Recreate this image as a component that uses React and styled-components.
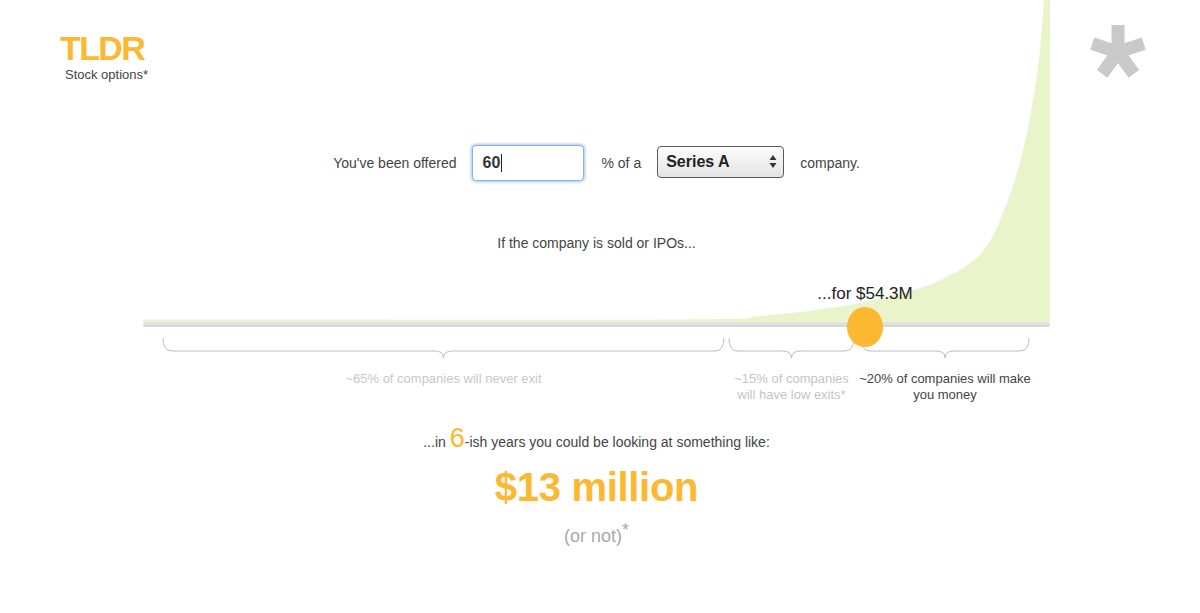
import React from "react";
import styled, { createGlobalStyle } from "styled-components";

const ORANGE = "#fcb831";
const GREEN = "#eaf4cb";

const GlobalStyle = createGlobalStyle`
  html, body {
    margin: 0;
    padding: 0;
    background: #fff;
  }
  body {
    font-family: "Liberation Sans", Arial, Helvetica, sans-serif;
    color: #444;
  }
`;

const Page = styled.div`
  position: relative;
  width: 1200px;
  height: 613px;
  overflow: hidden;
`;

const ChartBg = styled.svg`
  position: absolute;
  left: 143px;
  top: 0;
  z-index: 0;
`;

const Header = styled.header`
  position: relative;
  z-index: 1;
  display: flex;
  justify-content: space-between;
  align-items: flex-start;
  padding: 24px 51px 0 60px;
`;

const Logo = styled.div`
  margin-top: 5px;
`;

const LogoTitle = styled.div`
  font-size: 34px;
  line-height: 38px;
  font-weight: 700;
  letter-spacing: -1.6px;
  color: ${ORANGE};
`;

const LogoSub = styled.div`
  padding-left: 5px;
  font-size: 13px;
  line-height: 15px;
  color: #444;
`;

const Main = styled.main`
  position: relative;
  z-index: 1;
  width: 907px;
  margin-left: 143px;
  display: flex;
  flex-direction: column;
  align-items: center;
  text-align: center;
`;

const OfferRow = styled.div`
  display: flex;
  align-items: center;
  margin-top: 63px;
  font-size: 14px;
  color: #444;
`;

const Word = styled.span`
  margin: ${(p) => p.$m || "0"};
`;

const FakeInput = styled.div`
  box-sizing: border-box;
  width: 112px;
  height: 36px;
  display: flex;
  align-items: center;
  padding-left: 9px;
  border: 1px solid #8ab4e4;
  border-radius: 4px;
  box-shadow: 0 0 3px 1px rgba(110, 165, 230, 0.65);
  background: #fff;
  font-size: 16px;
  font-weight: 700;
  color: #333;
`;

const Caret = styled.span`
  display: inline-block;
  width: 1px;
  height: 18px;
  margin-left: 1px;
  background: #222;
`;

const Select = styled.div`
  box-sizing: border-box;
  width: 127px;
  height: 32px;
  margin-bottom: 3px;
  display: flex;
  align-items: center;
  justify-content: space-between;
  padding: 0 6px 0 8px;
  border: 1px solid #5a5a5a;
  border-radius: 4px;
  background: linear-gradient(#fbfbfb, #e4e4e4);
  font-size: 16px;
  font-weight: 700;
  color: #222;
`;

const Prompt = styled.div`
  margin-top: 54px;
  font-size: 14px;
  line-height: 16px;
  color: #444;
`;

const Slider = styled.div`
  position: relative;
  align-self: stretch;
  margin-top: 71px;
`;

const Track = styled.div`
  height: 5px;
  border-radius: 3px;
  background: linear-gradient(#e6e6e6, #d4d4d4);
`;

const Thumb = styled.div`
  position: absolute;
  top: -15px;
  width: 36px;
  height: 40px;
  border-radius: 50%;
  background: ${ORANGE};
  transform: translateX(-50%);
`;

const ValueLabel = styled.div`
  position: absolute;
  top: -38px;
  transform: translateX(-50%);
  white-space: nowrap;
  font-size: 17px;
  line-height: 20px;
  color: #222;
`;

const Segments = styled.div`
  display: flex;
  align-self: stretch;
  padding-left: 19px;
  margin-top: 11px;
`;

const Segment = styled.div`
  width: ${(p) => p.$w}px;
  margin-right: ${(p) => p.$gap || 0}px;
  display: flex;
  flex-direction: column;
  align-items: center;
`;

const SegLabel = styled.div`
  margin-top: 12px;
  font-size: 13px;
  line-height: 16px;
  color: ${(p) => p.$color};
  white-space: nowrap;
`;

const Years = styled.div`
  margin-top: 20px;
  font-size: 14px;
  line-height: 30px;
  color: #444;
`;

const BigSix = styled.span`
  font-size: 27px;
  color: ${ORANGE};
`;

const Amount = styled.div`
  margin-top: 6px;
  font-size: 40px;
  line-height: 48px;
  font-weight: 700;
  letter-spacing: -0.3px;
  color: ${ORANGE};
`;

const OrNot = styled.div`
  margin-top: 14px;
  font-size: 18px;
  line-height: 22px;
  color: #a8a8a8;
  sup {
    font-size: 18px;
    line-height: 0;
    vertical-align: 6px;
  }
`;

// catmull-rom through hand-picked points -> smooth bezier
const curvePoints = [
  [901, 0],
  [897, 50],
  [890, 100],
  [880, 150],
  [865, 200],
  [841, 250],
  [804, 277],
  [760, 293],
  [700, 306],
  [617, 316],
  [540, 319.5],
  [0, 319.5],
];

function buildCurve(pts) {
  let d = `M907,0 L${pts[0][0]},${pts[0][1]}`;
  for (let i = 0; i < pts.length - 1; i++) {
    const p0 = pts[i - 1] || pts[i];
    const p1 = pts[i];
    const p2 = pts[i + 1];
    const p3 = pts[i + 2] || p2;
    const c1 = [p1[0] + (p2[0] - p0[0]) / 6, p1[1] + (p2[1] - p0[1]) / 6];
    const c2 = [p2[0] - (p3[0] - p1[0]) / 6, p2[1] - (p3[1] - p1[1]) / 6];
    d += ` C${c1[0].toFixed(1)},${c1[1].toFixed(1)} ${c2[0].toFixed(1)},${c2[1].toFixed(1)} ${p2[0]},${p2[1]}`;
  }
  return d + " L0,322 L907,322 Z";
}

const Asterisk = () => (
  <svg width="62" height="58" viewBox="-31 -28 62 58">
    {[0, 72, 144, 216, 288].map((a) => (
      <rect key={a} x="-6.5" y="-27" width="13" height="28" fill="#c9c9c9" transform={`rotate(${a})`} />
    ))}
  </svg>
);

const Brace = ({ w }) => {
  const m = w / 2;
  return (
    <svg width={w} height="21" viewBox={`0 0 ${w} 21`}>
      <path
        d={`M1,0 Q1,13 10,13 L${m - 9},13 Q${m},13 ${m},20 Q${m},13 ${m + 9},13 L${w - 10},13 Q${w - 1},13 ${w - 1},0`}
        fill="none"
        stroke="#bdbdbd"
        strokeWidth="1"
      />
    </svg>
  );
};

const SelectArrows = () => (
  <svg width="8" height="13" viewBox="0 0 8 13">
    <path d="M4 0 L7.5 5 L0.5 5 Z" fill="#333" />
    <path d="M4 13 L7.5 8 L0.5 8 Z" fill="#333" />
  </svg>
);

const segments = [
  { w: 563, gap: 3, color: "#c8c8c8", lines: ["~65% of companies will never exit"] },
  { w: 127, gap: 5, color: "#c4c4c4", lines: ["~15% of companies", "will have low exits*"] },
  { w: 170, gap: 0, color: "#444", lines: ["~20% of companies will make", "you money"] },
];

const App = () => {
  const thumbX = 722; // px along the 907px track

  return (
    <Page>
      <GlobalStyle />
      <ChartBg width="907" height="322" viewBox="0 0 907 322">
        <path d={buildCurve(curvePoints)} fill={GREEN} />
      </ChartBg>
      <Header>
        <Logo>
          <LogoTitle>TLDR</LogoTitle>
          <LogoSub>Stock options*</LogoSub>
        </Logo>
        <Asterisk />
      </Header>
      <Main>
        <OfferRow>
          <Word $m="0 16px 0 0">You've been offered</Word>
          <FakeInput>
            60
            <Caret />
          </FakeInput>
          <Word $m="0 16px 0 17px">% of a</Word>
          <Select>
            Series A
            <SelectArrows />
          </Select>
          <Word $m="0 0 0 16px">company.</Word>
        </OfferRow>
        <Prompt>If the company is sold or IPOs...</Prompt>
        <Slider>
          <ValueLabel style={{ left: thumbX }}>...for $54.3M</ValueLabel>
          <Track />
          <Thumb style={{ left: thumbX }} />
        </Slider>
        <Segments>
          {segments.map((s, i) => (
            <Segment key={i} $w={s.w} $gap={s.gap}>
              <Brace w={s.w} />
              <SegLabel $color={s.color}>
                {s.lines.map((l, j) => (
                  <div key={j}>{l}</div>
                ))}
              </SegLabel>
            </Segment>
          ))}
        </Segments>
        <Years>
          ...in <BigSix>6</BigSix>-ish years you could be looking at something like:
        </Years>
        <Amount>$13 million</Amount>
        <OrNot>
          (or not)<sup>*</sup>
        </OrNot>
      </Main>
    </Page>
  );
};

export default App;
